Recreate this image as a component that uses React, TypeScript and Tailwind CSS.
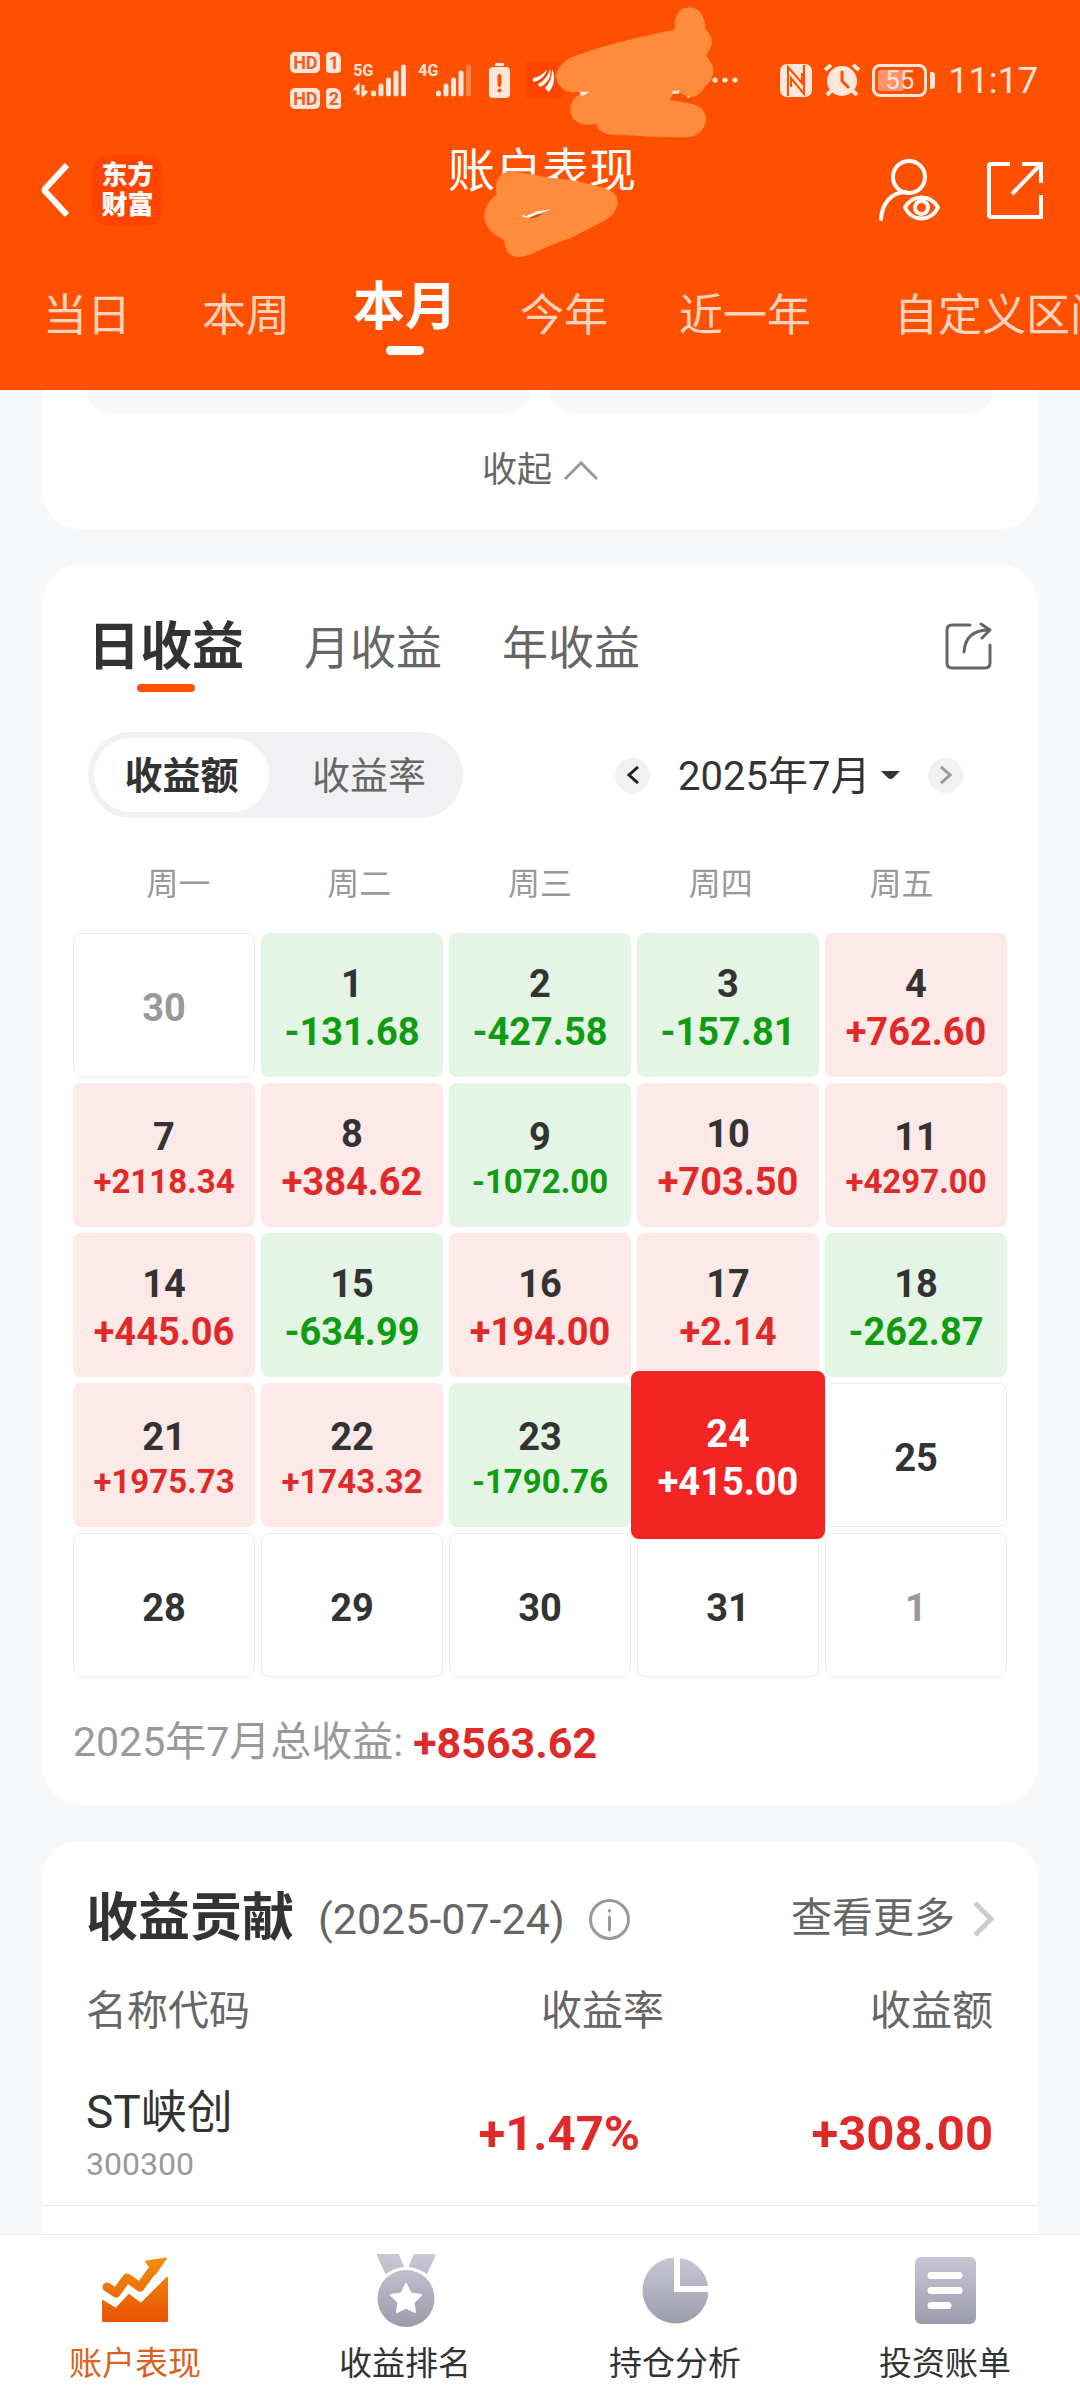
import React, { useState } from "react";

interface Day {
  date: number;
  amount?: string;
  outside?: boolean;
}

const periods = ["当日", "本周", "本月", "今年", "近一年", "自定义区间"];
const profitTabs = ["日收益", "月收益", "年收益"];
const modes = ["收益额", "收益率"];
const weekdays = ["周一", "周二", "周三", "周四", "周五"];
const months = ["2025年5月", "2025年6月", "2025年7月"];

const days: Day[] = [
  { date: 30, outside: true },
  { date: 1, amount: "-131.68" },
  { date: 2, amount: "-427.58" },
  { date: 3, amount: "-157.81" },
  { date: 4, amount: "+762.60" },
  { date: 7, amount: "+2118.34" },
  { date: 8, amount: "+384.62" },
  { date: 9, amount: "-1072.00" },
  { date: 10, amount: "+703.50" },
  { date: 11, amount: "+4297.00" },
  { date: 14, amount: "+445.06" },
  { date: 15, amount: "-634.99" },
  { date: 16, amount: "+194.00" },
  { date: 17, amount: "+2.14" },
  { date: 18, amount: "-262.87" },
  { date: 21, amount: "+1975.73" },
  { date: 22, amount: "+1743.32" },
  { date: 23, amount: "-1790.76" },
  { date: 24, amount: "+415.00" },
  { date: 25 },
  { date: 28 },
  { date: 29 },
  { date: 30 },
  { date: 31 },
  { date: 1, outside: true },
];

const SimBadge = ({ slot }: { slot: number }) => (
  <span className="flex h-[21px] gap-[6px] text-[18px] leading-[21px] font-bold text-[#e8622a]">
    <span className="w-[30px] rounded-[5px] bg-[#ffe6da] text-center">HD</span>
    <span className="w-[15px] rounded-[4px] rounded-tr-[7px] bg-[#ffe6da] text-center">{slot}</span>
  </span>
);

const Signal = ({ label, weak }: { label: string; weak?: boolean }) => (
  <span className="relative block h-[34px] w-[53px] text-[16px] leading-[16px] font-bold text-[#ffe6da]">
    {label}
    <svg className="absolute inset-0" width="53" height="34" viewBox="0 0 53 34" fill="none" stroke="#ffe6da" strokeWidth="5" strokeLinecap="round">
      <path d="M20.5 30v1M28 23v8M35.5 17v14M43 10v21" />
      <path d="M50.500 4v27" opacity={weak ? 0.35 : 1} />
      {!weak && <path d="M5 32V23L1 27M10 22v10l4-4" strokeWidth="3" strokeLinecap="butt" />}
    </svg>
  </span>
);

const StatusBar = () => (
  <div className="flex h-[60px] items-center justify-end pr-[42px] text-[#ffe6da]">
    <div className="flex flex-col gap-[15px]">
      <SimBadge slot={1} />
      <SimBadge slot={2} />
    </div>
    <div className="ml-3 flex gap-3">
      <Signal label="5G" />
      <Signal label="4G" weak />
    </div>
    <svg className="ml-[18px]" width="21" height="35" viewBox="0 0 21 35">
      <rect x="6" y="0" width="9" height="3" rx="1" fill="#ffe6da" />
      <rect x="0" y="4" width="21" height="31" rx="4" fill="#ffe6da" />
      <path d="M10.500 13v9" stroke="#ff5000" strokeWidth="4" strokeLinecap="round" />
      <circle cx="10.500" cy="27.500" r="2" fill="#ff5000" />
    </svg>
    <div className="relative ml-4 w-[184px]">
      <svg width="36" height="36" viewBox="0 0 36 36">
        <rect width="36" height="36" fill="#ff4400" />
        <g fill="#fff">
          <path d="M7 16c6-1 10-4 14-8-2 6-7 11-14 12z" />
          <path d="M12 22c6-3 10-8 12-15 2 8-3 15-10 18z" />
          <path d="M19 26c5-5 7-11 7-19 4 8 2 17-3 23z" />
        </g>
      </svg>
      <svg className="absolute -top-[59px] left-[27px]" width="164" height="137" viewBox="850 0 492 411" fill="#ff8c3c">
        <path d="M858 220Q862 190 900 165Q1020 118 1215 80V58Q1222 12 1262 12Q1304 18 1308 80Q1330 100 1326 125L1310 160Q1334 185 1331 210Q1326 235 1308 248Q1290 280 1266 282Q1240 280 1225 262Q1212 268 1200 291Q1230 297 1270 303Q1310 316 1309 352Q1302 396 1255 403Q1160 404 1060 396Q985 400 980 362Q940 372 912 350Q892 318 910 292Q925 272 945 268H905Q866 262 858 220Z" />
        <path d="M930 266L960 266L936 281ZM1208 264L1230 262L1228 272L1208 272ZM1250 278L1262 280L1256 286Z" fill="#ffe6da" />
      </svg>
    </div>
    <svg className="ml-[2px]" width="26" height="6" viewBox="0 0 26 6" fill="#ffe6da">
      <circle cx="3" cy="3" r="2.600" />
      <circle cx="13" cy="3" r="2.600" />
      <circle cx="23" cy="3" r="2.600" />
    </svg>
    <svg className="ml-[42px]" width="32" height="33" viewBox="0 0 32 33">
      <rect width="32" height="33" rx="7" fill="#ffe6da" />
      <path d="M8 32V3L22 19V9M24 1v29L11 14v9" fill="none" stroke="#ff5000" strokeWidth="2" />
    </svg>
    <svg className="ml-3" width="36" height="34" viewBox="0 0 36 34" fill="none" stroke="#ffe6da" strokeWidth="4">
      <circle cx="18" cy="18" r="15" fill="#ffe6da" stroke="none" />
      <path d="M1 7l6-5M35 7l-6-5M7 28l-4 4M29 28l4 4" />
      <path d="M18 9v9l6 6" stroke="#ff5000" strokeWidth="3" strokeLinecap="round" />
    </svg>
    <div className="ml-3 flex items-center gap-[3px]">
      <span className="relative flex h-[33px] w-[55px] items-center justify-center rounded-[8px] border-3 border-[#ffe6da] text-[26px] leading-[28px]">
        <span className="absolute top-[3px] bottom-[3px] left-[3px] w-[26px] rounded-[3px] bg-[#ff9468]" />
        <span className="relative">55</span>
      </span>
      <span className="h-[17px] w-[5px] rounded-r-[3px] bg-[#ffe6da]" />
    </div>
    <span className="ml-[13px] pt-[2px] text-[36px] leading-[48px]">11:17</span>
  </div>
);

const Header = ({ period, onChange }: { period: string; onChange: (p: string) => void }) => (
  <header className="bg-[#ff5000] pt-[50px] text-white">
    <StatusBar />
    <div className="mt-[10px] grid h-[140px] grid-cols-[1fr_auto_1fr] items-center pr-9 pl-10">
      <div className="flex items-center gap-[22px]">
        <button type="button" aria-label="返回">
          <svg width="30" height="54" viewBox="0 0 30 54" fill="none" stroke="#fff" strokeWidth="6">
            <path d="M27 2L4 27L27 52" strokeLinejoin="bevel" />
          </svg>
        </button>
        <span className="flex h-[71px] w-[71px] flex-col items-center justify-center rounded-[16px] bg-[#ff4400] text-[26px] leading-[30px] font-black">
          <span>东方</span>
          <span>财富</span>
        </span>
      </div>
      <div className="relative h-24">
        <h1 className="text-[47px] leading-[58px]">账户表现</h1>
        <svg className="absolute top-[25px] left-[32px]" width="143" height="93" viewBox="630 500 430 280" fill="#ff8c3c">
          <path d="M678 560Q680 514 725 513Q780 522 840 532Q930 540 1000 562Q1044 575 1045 608Q1042 640 1005 662Q950 690 900 715Q840 735 800 755Q760 775 735 770Q706 762 702 720Q640 690 642 640Q650 605 680 583Z" />
          <path d="M758 642L768 648L800 634L845 627L818 637L775 653L758 650Z" fill="#fff" />
          <path d="M775 655L800 643L822 639L800 652Z" fill="#c4551a" />
        </svg>
      </div>
      <div className="flex items-center justify-end gap-[45px]">
        <button type="button" aria-label="账户查看">
          <svg width="64" height="64" viewBox="0 0 64 64" fill="none" stroke="#fff" strokeWidth="4" strokeLinecap="round">
            <circle cx="32" cy="19" r="16" />
            <path d="M4 61C5 46 14 34 29 34" />
            <path d="M28 49.500C35 36 54 36 61 49.500C54 64 35 64 28 49.500Z" strokeLinejoin="round" />
            <circle cx="44.500" cy="49.500" r="6.500" />
          </svg>
        </button>
        <button type="button" aria-label="分享">
          <svg width="58" height="59" viewBox="0 0 58 59" fill="none" stroke="#fff" strokeWidth="4">
            <path d="M24 3H5Q3 3 3 5V54Q3 56 5 56H55V34" />
            <path d="M36 3H55V22M55 3L26 33" />
          </svg>
        </button>
      </div>
    </div>
    <nav className="flex h-[130px] items-start gap-[71px] overflow-hidden pt-5 pl-[43px] whitespace-nowrap">
      {periods.map((p) =>
        p === period ? (
          <button key={p} type="button" className="flex min-w-[88px] flex-col items-center text-[52px] leading-[56px] font-bold">
            <span className="-mx-2">{p}</span>
            <span className="mt-[10px] h-[9px] w-[38px] rounded-full bg-white" />
          </button>
        ) : (
          <button key={p} type="button" onClick={() => onChange(p)} className="text-[44px] leading-[72px] text-[#ffd3bd] last:ml-3">
            {p}
          </button>
        )
      )}
    </nav>
  </header>
);

const DayCell = ({ day, selected }: { day: Day; selected: boolean }) => {
  const gain = day.amount?.startsWith("+");
  const long = (day.amount?.length ?? 0) > 7;

  let box = "border border-[#ececec] bg-white";
  if (day.amount) box = gain ? "bg-[#fde9e8]" : "bg-[#e4f4e5]";
  // the picked day grows past its own cell
  if (selected) box = "relative z-10 -mx-[6px] -my-3 bg-[#f32424]";

  const dateColor = selected ? "text-white" : day.outside ? "text-[#999999]" : "text-[#333333]";
  const amountColor = selected ? "text-white" : gain ? "text-[#e02a2a]" : "text-[#109c10]";

  return (
    <button type="button" className={`flex flex-col items-center justify-center rounded-[8px] pt-[6px] font-bold ${box}`}>
      <span className={`text-[38px] leading-[48px] ${dateColor}`}>{day.date}</span>
      {day.amount && (
        <span className={`${long ? "text-[33px] leading-[42px]" : "text-[38px] leading-[48px]"} ${amountColor}`}>{day.amount}</span>
      )}
    </button>
  );
};

const CalendarCard = () => {
  const [tab, setTab] = useState<string>("日收益");
  const [mode, setMode] = useState<string>("收益额");
  const [month, setMonth] = useState<string>("2025年7月");

  return (
    <section className="mt-9 rounded-[36px] bg-white">
      <div className="flex h-[167px] items-start justify-between px-[45px] pt-[55px]">
        <div className="flex gap-[60px]">
          {profitTabs.map((t) =>
            t === tab ? (
              <button key={t} type="button" className="flex flex-col items-center text-[52px] leading-[56px] font-bold text-[#333333]">
                {t}
                <span className="mt-2 h-[8px] w-[58px] rounded-full bg-[#ff5000]" />
              </button>
            ) : (
              <button key={t} type="button" onClick={() => setTab(t)} className="self-start text-[46px] leading-[56px] text-[#666666]">
                {t}
              </button>
            )
          )}
        </div>
        <button type="button" aria-label="分享收益" className="mt-[2px]">
          <svg width="47" height="48" viewBox="0 0 47 48" fill="none" stroke="#666" strokeWidth="3" strokeLinecap="round" strokeLinejoin="round">
            <path d="M25 3H7Q2 3 2 8V41Q2 46 7 46H40Q45 46 45 41V23" />
            <path d="M19 30C20 15 29 8 44 8M36 2L45 8L37 16" />
          </svg>
        </button>
      </div>

      <div className="flex items-center justify-between pr-[74px] pl-[45px]">
        <div className="flex h-[86px] w-[375px] rounded-full bg-[#f1f1f3] p-[6px] text-[38px] leading-[76px]">
          {modes.map((m) => (
            <button
              key={m}
              type="button"
              aria-pressed={m === mode}
              onClick={() => setMode(m)}
              className={m === mode ? "w-[175px] rounded-full bg-white font-bold text-[#333333]" : "flex-1 pl-3 text-[#666666]"}
            >
              {m}
            </button>
          ))}
        </div>
        <div className="flex items-center gap-7">
          <button type="button" aria-label="上个月" className="flex h-[35px] w-[35px] items-center justify-center rounded-full bg-[#f1f1f3]">
            <svg width="12" height="18" viewBox="0 0 12 18" fill="none" stroke="#222" strokeWidth="3">
              <path d="M11 1L2 9L11 17" />
            </svg>
          </button>
          <label className="flex items-center gap-[10px]">
            <select
              aria-label="月份"
              value={month}
              onChange={(e) => setMonth(e.target.value)}
              className="appearance-none bg-transparent pt-1 text-[40px] leading-[56px] text-[#333333] outline-none"
            >
              {months.map((m) => (
                <option key={m}>{m}</option>
              ))}
            </select>
            <svg width="19" height="9" viewBox="0 0 19 9" fill="#333">
              <path d="M0 0H19L12 7Q9.500 9 7 7Z" />
            </svg>
          </label>
          <button type="button" aria-label="下个月" className="flex h-[35px] w-[35px] items-center justify-center rounded-full bg-[#f1f1f3]">
            <svg width="12" height="18" viewBox="0 0 12 18" fill="none" stroke="#999" strokeWidth="3">
              <path d="M1 1L10 9L1 17" />
            </svg>
          </button>
        </div>
      </div>

      <div className="mt-[42px] grid grid-cols-5 px-[45px] text-center text-[32px] leading-[48px] text-[#999999]">
        {weekdays.map((w) => (
          <span key={w}>{w}</span>
        ))}
      </div>
      <div className="mt-[25px] grid auto-rows-[144px] grid-cols-5 gap-[6px] px-[30px]">
        {days.map((day, index) => (
          <DayCell key={index} day={day} selected={day.date === 24} />
        ))}
      </div>

      <p className="flex h-32 items-center gap-[10px] px-[30px] pt-1 text-[41px] text-[#999999]">
        2025年7月总收益:
        <strong className="text-[43px] text-[#e02a2a]">+8563.62</strong>
      </p>
    </section>
  );
};

const ContributionCard = () => (
  <section className="mt-9 flex-1 rounded-t-[36px] bg-white pt-9">
    <div className="flex h-[84px] items-center justify-between pr-[42px] pl-[43px]">
      <div className="flex items-center gap-6">
        <h2 className="text-[52px] leading-[64px] font-bold text-[#333333]">收益贡献</h2>
        <span className="text-[43px] text-[#666666]">(2025-07-24)</span>
        <button type="button" aria-label="说明">
          <svg width="41" height="41" viewBox="0 0 41 41" fill="none" stroke="#999" strokeWidth="3" strokeLinecap="round">
            <circle cx="20.500" cy="20.500" r="19" />
            <path d="M20.500 18v13M20.500 11.500v.5" />
          </svg>
        </button>
      </div>
      <a href="#more" className="flex items-center gap-[18px] text-[41px] text-[#666666]">
        查看更多
        <svg width="22" height="36" viewBox="0 0 22 36" fill="none" stroke="#ccc" strokeWidth="5">
          <path d="M2 2L18 18L2 34" />
        </svg>
      </a>
    </div>
    <table className="w-full border-collapse">
      <thead>
        <tr className="h-[102px] text-[41px] text-[#666666]">
          <th className="pl-[43px] text-left font-normal">名称代码</th>
          <th className="text-right font-normal">收益率</th>
          <th className="w-[373px] pr-[44px] text-right font-normal">收益额</th>
        </tr>
      </thead>
      <tbody>
        <tr className="h-[142px] border-b border-[#ebebeb] text-[49px] font-bold text-[#e02a2a]">
          <td className="pt-1 pl-[43px] font-normal">
            <div className="text-[46px] leading-[56px] text-[#333333]">ST峡创</div>
            <div className="text-[32px] leading-[48px] text-[#999999]">300300</div>
          </td>
          <td className="pr-6 text-right">+1.47%</td>
          <td className="pr-[44px] text-right">+308.00</td>
        </tr>
      </tbody>
    </table>
  </section>
);

const TrendIcon = () => (
  <svg width="72" height="76" viewBox="0 0 72 76" fill="url(#warm)" stroke="url(#warm)" strokeLinejoin="round">
    <defs>
      <linearGradient id="warm" gradientUnits="userSpaceOnUse" x1="0" y1="4" x2="0" y2="70">
        <stop offset="0" stopColor="#f29111" />
        <stop offset="1" stopColor="#e85200" />
      </linearGradient>
    </defs>
    <path d="M8 34L17 40L28 25L41 34L58 11" fill="none" strokeWidth="9" strokeLinecap="round" />
    <path d="M47 8.500L67 5.500L56 21Z" strokeWidth="2" />
    <path d="M4 48L17 56L30 42L42 51L68 25V68H4Z" strokeWidth="2" />
  </svg>
);

const MedalIcon = () => (
  <svg width="72" height="76" viewBox="0 0 72 76" fill="url(#cool)">
    <defs>
      <linearGradient id="cool" gradientUnits="userSpaceOnUse" x1="0" y1="0" x2="0" y2="74">
        <stop offset="0" stopColor="#cac9da" />
        <stop offset="1" stopColor="#9b9aaa" />
      </linearGradient>
    </defs>
    <path d="M9 1H28Q30 1 30.500 3L35 14Q25 15 16.500 21L8 3Q7.500 1 9 1Z" />
    <path d="M65 1H46Q45 1 44 3L39.500 14Q49 15 58 21L66.500 3Q67 1 65 1Z" />
    <circle cx="37" cy="45.500" r="28.500" />
    <path d="M37 31L41.500 40.500L52 42L44.500 49.500L46 59L37 54.500L28 59L29.500 49.500L22 42L32.500 40.500Z" fill="#fff" stroke="#fff" strokeWidth="2" strokeLinejoin="round" />
  </svg>
);

const PieIcon = () => (
  <svg width="72" height="76" viewBox="0 0 72 76" fill="url(#cool)">
    <path d="M35 4.500A33 33 0 1 0 69.500 39H35Z" />
    <path d="M41 5A33 33 0 0 1 69 33H41Z" />
  </svg>
);

const BillIcon = () => (
  <svg width="72" height="76" viewBox="0 0 72 76" fill="url(#cool)">
    <rect x="6" y="4" width="61" height="67" rx="6" />
    <path d="M22 22.500H50M22 37.500H50M22 52.500H39" stroke="#fff" strokeWidth="7" strokeLinecap="round" />
  </svg>
);

const navItems = [
  { label: "账户表现", Icon: TrendIcon },
  { label: "收益排名", Icon: MedalIcon },
  { label: "持仓分析", Icon: PieIcon },
  { label: "投资账单", Icon: BillIcon },
];

const App: React.FC = () => {
  const [period, setPeriod] = useState<string>("本月");

  return (
    <div className="flex min-h-screen flex-col bg-[#f6f8fa] font-['Roboto','Noto_Sans_CJK_SC',sans-serif]">
      <Header period={period} onChange={setPeriod} />

      <main className="flex flex-1 flex-col px-[43px]">
        <section className="rounded-b-[36px] bg-white px-[45px]">
          <div className="grid grid-cols-2 gap-[22px]">
            <div className="h-[23px] rounded-b-[20px] bg-[#f7f7fa]" />
            <div className="h-[23px] rounded-b-[20px] bg-[#f7f7fa]" />
          </div>
          <button type="button" className="flex h-[116px] w-full items-center justify-center gap-3 text-[35px] text-[#666666]">
            收起
            <svg width="34" height="20" viewBox="0 0 34 20" fill="none" stroke="#999" strokeWidth="3">
              <path d="M1 18L17 2L33 18" />
            </svg>
          </button>
        </section>
        <CalendarCard />
        <ContributionCard />
      </main>

      <nav className="sticky bottom-0 z-20 grid h-[166px] grid-cols-4 border-t border-[#ebebeb] bg-white pt-[18px]">
        {navItems.map(({ label, Icon }, index) => (
          <a
            key={label}
            href="#tab"
            className={`flex flex-col items-center gap-[11px] text-[33px] leading-[48px] ${index === 0 ? "text-[#d8631f]" : "text-[#333333]"}`}
          >
            <Icon />
            {label}
          </a>
        ))}
      </nav>
    </div>
  );
};

export default App;
